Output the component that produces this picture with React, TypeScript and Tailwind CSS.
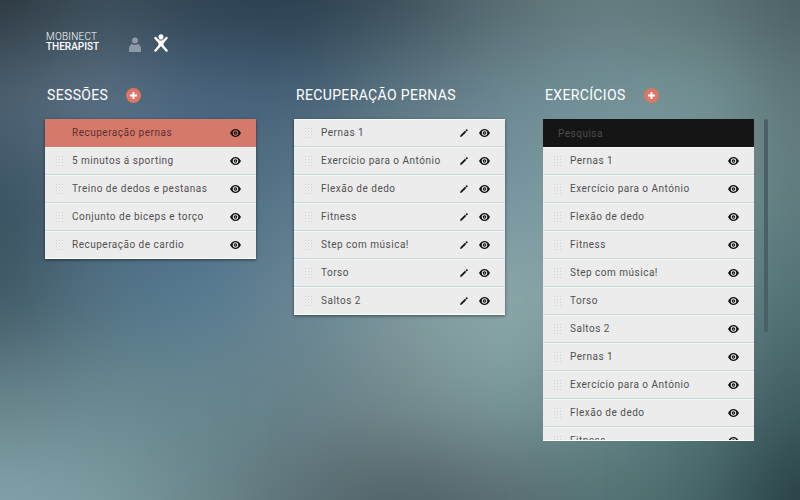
import React from "react";

const sessions = [
  "Recuperação pernas",
  "5 minutos á sporting",
  "Treino de dedos e pestanas",
  "Conjunto de biceps e torço",
  "Recuperação de cardio",
];

const exercises = [
  "Pernas 1",
  "Exercício para o António",
  "Flexão de dedo",
  "Fitness",
  "Step com música!",
  "Torso",
  "Saltos 2",
];

const library = [...exercises, ...exercises.slice(0, 4)];

// Colour mesh of the blurred backdrop, one row of swatches per line.
const mesh = [
  ["#2a353c", "#3a4c57", "#2d4151", "#293d4d", "#3b4e59", "#566b70", "#647b7e", "#5c7275", "#4a5e62"],
  ["#4e6272", "#5e7489", "#4b6680", "#48637a", "#5f7986", "#6d8892", "#74929a", "#759497", "#5f767a"],
  ["#38515f", "#4b687e", "#4a6a85", "#5a7a8a", "#6c8b95", "#7896a0", "#7d9da3", "#759496", "#5f7a7d"],
  ["#405864", "#517284", "#577b92", "#688694", "#809a9e", "#8faaad", "#7c9c9e", "#66888b", "#507073"],
  ["#68838a", "#6a8990", "#66868f", "#69828a", "#758c90", "#7c9a9b", "#6b8c8d", "#55777a", "#3f5c60"],
  ["#83a3aa", "#7c9ca3", "#6d888c", "#5a7075", "#505f65", "#586a6e", "#547375", "#456668", "#263d43"],
];

function Backdrop() {
  return (
    <svg
      viewBox="0 0 800 500"
      preserveAspectRatio="none"
      className="absolute inset-0 -z-10 size-full"
      aria-hidden="true"
    >
      <filter id="soften" x="-20%" y="-20%" width="140%" height="140%" colorInterpolationFilters="sRGB">
        <feGaussianBlur stdDeviation="42" />
      </filter>
      <rect width="800" height="500" fill="#5b7c88" />
      <g filter="url(#soften)">
        {mesh.map((line, r) =>
          line.map((color, c) => {
            const left = c === 0 ? -150 : c * 100 - 50;
            const right = c === 8 ? 950 : c * 100 + 51;
            const top = r === 0 ? -150 : r * 100 - 50;
            const bottom = r === 5 ? 650 : r * 100 + 51;
            return (
              <rect key={`${r}-${c}`} x={left} y={top} width={right - left} height={bottom - top} fill={color} />
            );
          })
        )}
      </g>
    </svg>
  );
}

function EyeIcon() {
  return (
    <svg viewBox="0 0 22 16" className="h-2 w-[11px]" fill="currentColor" aria-hidden="true">
      <path
        fillRule="evenodd"
        d="M0 8C3 3 6.500 0 11 0s8 3 11 8c-3 5-6.500 8-11 8S3 13 0 8Zm11-5.500a5.500 5.500 0 1 0 0 11 5.500 5.500 0 0 0 0-11Z"
      />
      <path
        fillRule="evenodd"
        d="M11 4.500a3.500 3.500 0 1 0 0 7 3.500 3.500 0 0 0 0-7Zm0 2.250a1.250 1.250 0 1 1 0 2.500 1.250 1.250 0 0 1 0-2.500Z"
      />
    </svg>
  );
}

function PencilIcon() {
  return (
    <svg viewBox="0 0 16 16" className="size-2" fill="currentColor" aria-hidden="true">
      <path d="M0 16 1 12.500 10 3.500 12.500 6 3.500 15ZM11 2.500 13 .5Q13.500 0 14 .5L15.500 2Q16 2.500 15.500 3L13.500 5Z" />
    </svg>
  );
}

function GripIcon() {
  const steps = [0, 1, 2, 3];
  return (
    <svg viewBox="0 0 8 10" className="h-2.5 w-2 text-[#d0d0d0]" fill="currentColor" aria-hidden="true">
      {steps.map((row) =>
        steps.slice(0, 3).map((col) => (
          <rect key={`${row}-${col}`} x={col * 3} y={row * 3} width="1" height="1" />
        ))
      )}
    </svg>
  );
}

function UserIcon() {
  return (
    <svg viewBox="0 0 24 30" className="h-[15px] w-3" fill="currentColor" aria-hidden="true">
      <circle cx="12" cy="7" r="6" />
      <path d="M0 30v-5c0-6 2-9 6-11 4 2.500 8 2.500 12 0 4 2 6 5 6 11v5Z" />
    </svg>
  );
}

function JumpIcon() {
  return (
    <svg viewBox="0 0 28 36" className="h-[18px] w-3.5" aria-hidden="true">
      <path
        d="M3 8 25 33M25 8 3 33"
        stroke="#fff"
        strokeWidth="5"
        strokeLinecap="round"
        fill="none"
      />
      <path d="M7 11h14l-2 7v7l-5-2-5 2v-7Z" fill="#fff" />
      <circle cx="14" cy="5.500" r="5" fill="#fff" />
      <path d="M9.500 11.500q4.500 3 9 0" stroke="#6d8294" strokeWidth="1.500" fill="none" />
    </svg>
  );
}

function AddButton({ label }: { label: string }) {
  return (
    <button
      type="button"
      aria-label={label}
      className="flex size-[15px] items-center justify-center rounded-full bg-[#dc7665] text-white"
    >
      <svg viewBox="0 0 7 7" className="size-[7px]" fill="currentColor" aria-hidden="true">
        <path d="M2.500 0h2v2.500H7v2H4.500V7h-2V4.500H0v-2h2.500Z" />
      </svg>
    </button>
  );
}

function ColumnTitle({ title, addLabel }: { title: string; addLabel?: string }) {
  return (
    <div className="mb-4 flex h-4 items-center gap-[18px] pl-0.5">
      <h2 className="text-sm leading-4 tracking-wide whitespace-nowrap">{title}</h2>
      {addLabel && <AddButton label={addLabel} />}
    </div>
  );
}

function Row({ name, active, editable }: { name: string; active?: boolean; editable?: boolean }) {
  return (
    <li
      className={
        active
          ? "flex h-7 items-center bg-[#d57a6b] pr-[15px] pl-[11px] text-[#57322d]"
          : "flex h-7 items-center border-t border-b border-t-[#f8f8f8] border-b-[#cbd6da] bg-[#ececec] pr-[15px] pl-[11px] text-[#505050] last:border-b-white"
      }
    >
      <span className="w-2">{!active && <GripIcon />}</span>
      <span className="ml-2 flex-1 truncate text-[10px] leading-4 tracking-wider">{name}</span>
      <span className="flex items-center gap-[11px] text-[#111]">
        {editable && (
          <button type="button" aria-label={`Editar ${name}`}>
            <PencilIcon />
          </button>
        )}
        <button type="button" aria-label={`Ver ${name}`}>
          <EyeIcon />
        </button>
      </span>
    </li>
  );
}

export default function App() {
  return (
    <div className="relative isolate min-h-screen overflow-hidden pt-8 pr-[46px] pb-10 pl-[45px] font-[Roboto,sans-serif] text-white">
      <Backdrop />
      <header className="mb-[35px] flex h-5 items-end gap-[30px] pl-px">
        <h1 className="text-[10px] leading-[10px]">
          <span className="block font-light tracking-wide">MOBINECT</span>
          <span className="block font-medium">THERAPIST</span>
        </h1>
        <nav className="flex items-end gap-[13px]">
          <button type="button" aria-label="Pacientes" className="text-[#8c9ba7]">
            <UserIcon />
          </button>
          <button type="button" aria-label="Exercícios">
            <JumpIcon />
          </button>
        </nav>
      </header>

      <main className="grid grid-cols-3 items-start gap-[38px]">
        <section>
          <ColumnTitle title="SESSÕES" addLabel="Adicionar sessão" />
          <ul className="shadow-[0_1px_3px_rgba(0,0,0,0.5)]">
            {sessions.map((name, i) => (
              <Row key={name} name={name} active={i === 0} />
            ))}
          </ul>
        </section>

        <section>
          <ColumnTitle title="RECUPERAÇÃO PERNAS" />
          <ul className="shadow-[0_1px_3px_rgba(0,0,0,0.5)]">
            {exercises.map((name) => (
              <Row key={name} name={name} editable />
            ))}
          </ul>
        </section>

        <section>
          <ColumnTitle title="EXERCÍCIOS" addLabel="Adicionar exercício" />
          <div className="relative">
            <input
              type="search"
              aria-label="Pesquisa"
              placeholder="Pesquisa"
              className="block h-7 w-full bg-[#151515] px-[15px] text-[10px] leading-4 tracking-wider text-white outline-none placeholder:text-[#4c4c4c]"
            />
            <ul className="max-h-[294px] overflow-y-auto border-b border-white [scrollbar-width:none]">
              {library.map((name, i) => (
                <Row key={i} name={name} />
              ))}
            </ul>
            <div className="absolute top-0 -right-3.5 h-[213px] w-1 rounded-full bg-[#4a6066]" />
          </div>
        </section>
      </main>
    </div>
  );
}
